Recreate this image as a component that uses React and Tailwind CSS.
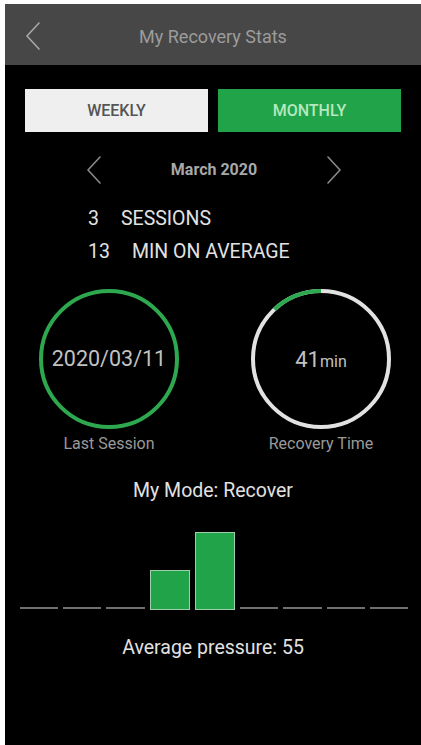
import { useState } from 'react';

const bars = [0, 0, 0, 40, 78, 0, 0, 0, 0];

function Chevron({ dir = 'left', className }) {
  const d = dir === 'left' ? 'M13 1 L1 14 L13 27' : 'M1 1 L13 14 L1 27';
  return (
    <svg width="14" height="28" viewBox="0 0 14 28" className={className}>
      <path d={d} fill="none" stroke="currentColor" strokeWidth="1.6" strokeLinecap="round" strokeLinejoin="round" />
    </svg>
  );
}

function Ring({ progress, track, bar, children }) {
  const r = 68;
  const c = 2 * Math.PI * r;
  return (
    <div className="relative w-[142px] h-[142px]">
      <svg width="142" height="142" viewBox="0 0 142 142">
        <circle cx="71" cy="71" r={r} fill="none" stroke={track} strokeWidth="4" />
        {progress > 0 && (
          <circle
            cx="71"
            cy="71"
            r={r}
            fill="none"
            stroke={bar}
            strokeWidth="4"
            strokeDasharray={`${c * progress} ${c}`}
            transform="rotate(-90 71 71) scale(1 -1) translate(0 -142)"
          />
        )}
      </svg>
      <div className="absolute inset-0 flex items-center justify-center">{children}</div>
    </div>
  );
}

export default function App() {
  const [tab, setTab] = useState('monthly');

  return (
    <div className="w-[421px] h-[745px] bg-white pl-[5px] pt-[4px] overflow-hidden" style={{ fontFamily: 'Roboto, "Noto Sans", sans-serif' }}>
      <div className="h-full bg-black flex flex-col">
        {/* Header */}
        <div className="h-[61px] bg-[#474747] flex items-center relative">
          <Chevron className="absolute left-[21px] top-[18px] text-[#a8a8a8]" />
          <h1 className="w-full text-center text-[18px] text-[#9c9c9c] pt-[3px]">My Recovery Stats</h1>
        </div>

        {/* Tabs */}
        <div className="grid grid-cols-2 gap-[10px] px-[20px] mt-[24px]">
          <button
            onClick={() => setTab('weekly')}
            className={`h-[43px] text-[16px] font-medium ${tab === 'weekly' ? 'bg-[#21a34a] text-[#b5e8bf]' : 'bg-[#efefef] text-[#555555]'}`}
          >
            WEEKLY
          </button>
          <button
            onClick={() => setTab('monthly')}
            className={`h-[43px] text-[16px] font-medium ${tab === 'monthly' ? 'bg-[#21a34a] text-[#b5e8bf]' : 'bg-[#efefef] text-[#555555]'}`}
          >
            MONTHLY
          </button>
        </div>

        {/* Month nav */}
        <div className="flex items-center justify-between pl-[82px] pr-[80px] mt-[24px] h-[28px]">
          <Chevron className="text-[#8a8a8a]" />
          <span className="text-[16px] font-bold text-[#a8a8a8]">March 2020</span>
          <Chevron dir="right" className="text-[#8a8a8a]" />
        </div>

        {/* Summary */}
        <div className="pl-[83px] mt-[18px] text-[19.5px] text-[#e2e2e2] leading-[33px]">
          <div className="flex">
            <span className="w-[33px]">3</span>
            <span>SESSIONS</span>
          </div>
          <div className="flex">
            <span className="w-[44px]">13</span>
            <span>MIN ON AVERAGE</span>
          </div>
        </div>

        {/* Rings */}
        <div className="grid grid-cols-2 mt-[20px]">
          <div className="flex flex-col items-center">
            <Ring progress={0} track="#2ea84f" bar="#2ea84f">
              <span className="text-[21.5px] text-[#c2c2c2]">2020/03/11</span>
            </Ring>
            <span className="mt-[4px] text-[16px] leading-[20px] text-[#9a9a9a]">Last Session</span>
          </div>
          <div className="flex flex-col items-center pl-[8px]">
            <Ring progress={0.12} track="#e2e2e2" bar="#2ea84f">
              <span className="text-[#c2c2c2]">
                <span className="text-[22px]">41</span>
                <span className="text-[16px]">min</span>
              </span>
            </Ring>
            <span className="mt-[4px] text-[16px] leading-[20px] text-[#9a9a9a]">Recovery Time</span>
          </div>
        </div>

        {/* Mode */}
        <div className="text-center text-[19.5px] leading-[24px] text-[#e2e2e2] mt-[25px]">My Mode: Recover</div>

        {/* Chart */}
        <div className="flex items-end gap-[5px] pl-[15px] pr-[13px] h-[80px] mt-[27px]">
          {bars.map((h, i) =>
            h > 0 ? (
              <div key={i} className="flex-1 bg-[#21a34a] border border-[#9fcfaa]" style={{ height: h }} />
            ) : (
              <div key={i} className="flex-1 h-[2px] bg-[#6f6f6f] mb-[1px]" />
            )
          )}
        </div>

        <div className="text-center text-[19.5px] leading-[24px] text-[#e2e2e2] mt-[26px]">Average pressure: 55</div>
      </div>
    </div>
  );
}
